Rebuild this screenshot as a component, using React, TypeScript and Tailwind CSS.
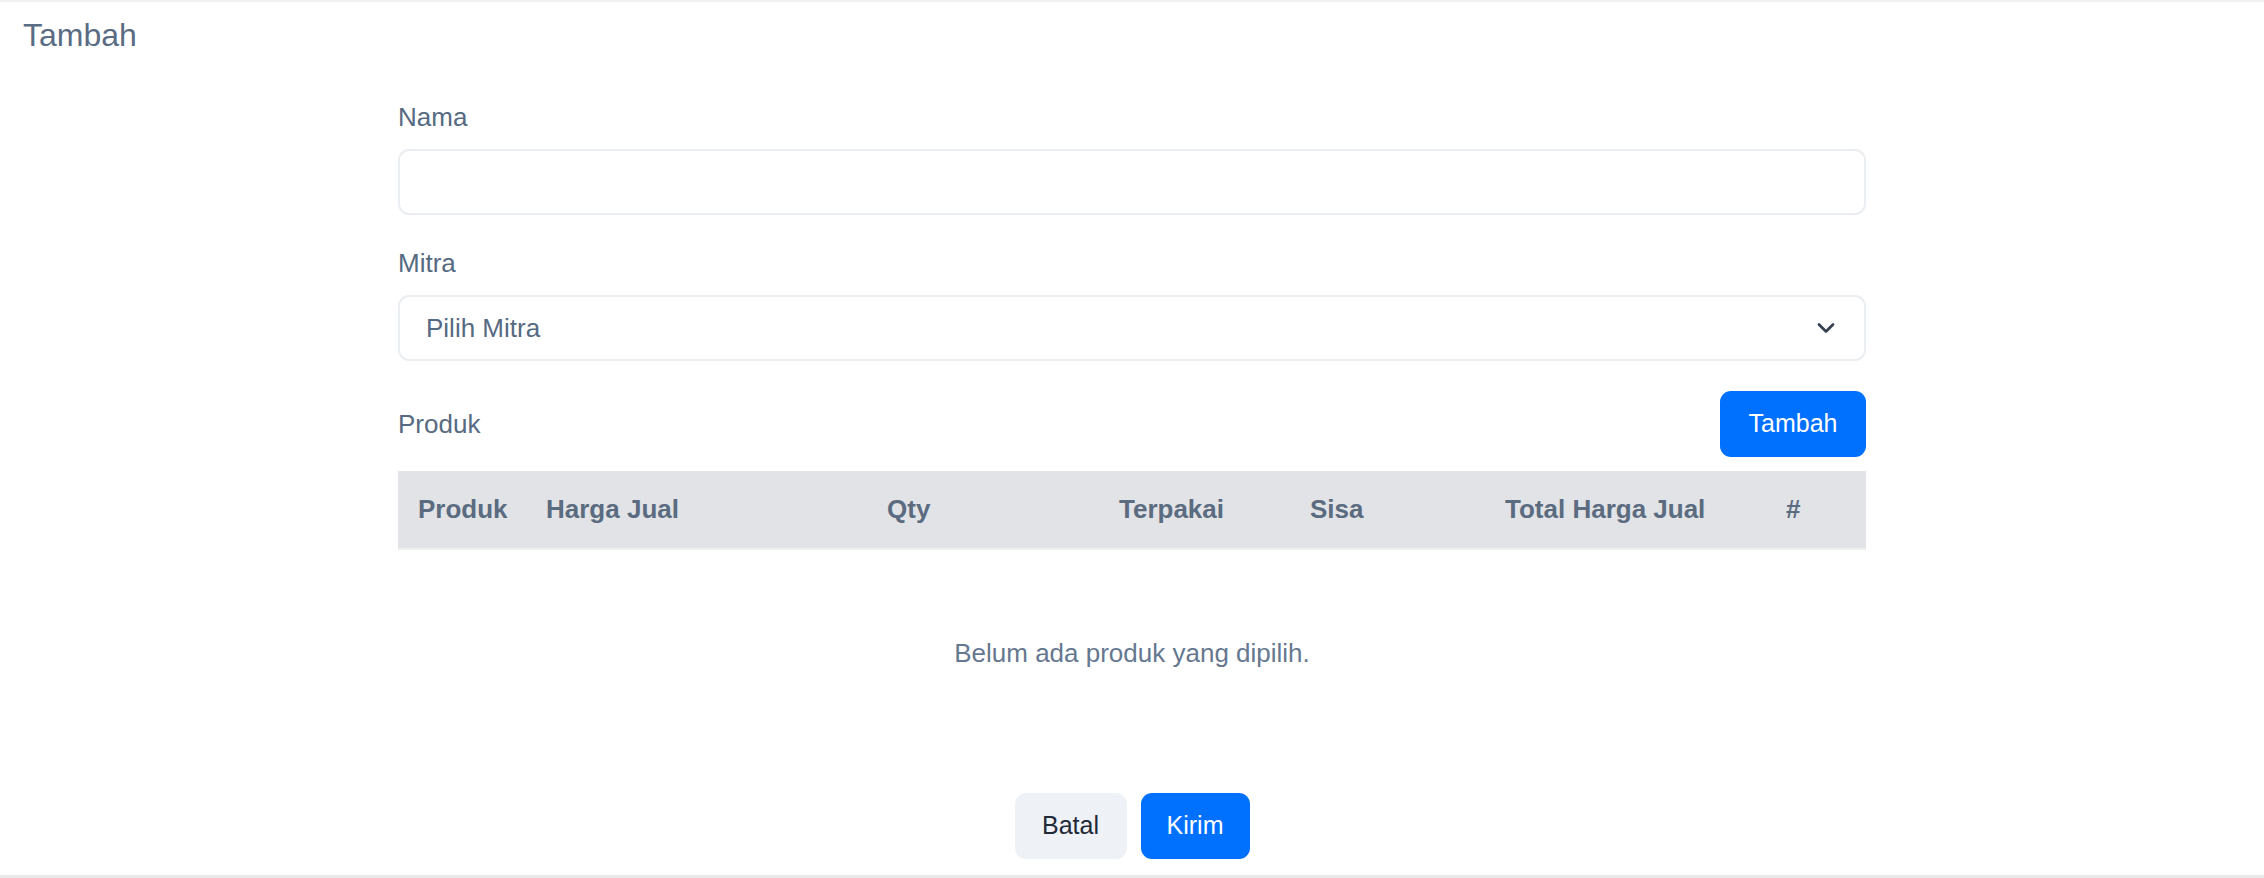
import React, { useState } from 'react';

const font = { fontFamily: '"Liberation Sans", Arial, sans-serif' };

const columns: { label: string; width: string }[] = [
  { label: 'Produk', width: 'w-[128px]' },
  { label: 'Harga Jual', width: 'w-[341px]' },
  { label: 'Qty', width: 'w-[232px]' },
  { label: 'Terpakai', width: 'w-[191px]' },
  { label: 'Sisa', width: 'w-[195px]' },
  { label: 'Total Harga Jual', width: 'w-[281px]' },
  { label: '#', width: 'w-[100px]' },
];

const ChevronDown = () => (
  <svg width="18" height="11" viewBox="0 0 18 11" fill="none">
    <path d="M2 2 L9 9 L16 2" stroke="#374151" strokeWidth="2.75" strokeLinecap="round" strokeLinejoin="round" />
  </svg>
);

const App: React.FC = () => {
  const [nama, setNama] = useState('');
  const [mitra, setMitra] = useState('');

  return (
    <div
      className="h-[878px] w-full bg-white border-t-2 border-t-[#f1f1f1] border-b-[3px] border-b-[#e9e9e9] flex flex-col"
      style={font}
    >
      <h1 className="mt-[15px] pl-[23px] text-[32px] leading-[37px] text-[#5a6c83] font-normal">Tambah</h1>

      <form className="mx-auto w-[1468px] mt-[47px] flex flex-col" onSubmit={e => e.preventDefault()}>
        <label className="text-[26px] leading-[32px] text-[#566a82]">Nama</label>
        <input
          type="text"
          value={nama}
          onChange={e => setNama(e.target.value)}
          className="mt-4 h-[66px] w-full rounded-[11px] border-2 border-[#eaedf1] px-[26px] text-[26px] text-[#566a82] outline-none"
        />

        <label className="mt-8 text-[26px] leading-[32px] text-[#566a82]">Mitra</label>
        <div className="relative mt-4">
          <select
            value={mitra}
            onChange={e => setMitra(e.target.value)}
            className="h-[66px] w-full appearance-none rounded-[11px] border-2 border-[#eaedf1] bg-white pl-[26px] pr-14 text-[26px] text-[#566a82] outline-none"
          >
            <option value="">Pilih Mitra</option>
          </select>
          <span className="pointer-events-none absolute right-[31px] top-1/2 -translate-y-1/2 flex">
            <ChevronDown />
          </span>
        </div>

        <div className="mt-[30px] flex items-center justify-between">
          <span className="text-[26px] leading-[32px] text-[#566a82]">Produk</span>
          <button
            type="button"
            className="h-[66px] w-[146px] rounded-[11px] bg-[#0071ff] text-[25px] text-white"
          >
            Tambah
          </button>
        </div>

        <table className="mt-[14px] w-full table-fixed border-collapse">
          <colgroup>
            {columns.map(c => (
              <col key={c.label} className={c.width} />
            ))}
          </colgroup>
          <thead>
            <tr className="bg-[#e1e3e6] border-b-2 border-[#eceef0]">
              {columns.map(c => (
                <th
                  key={c.label}
                  className="h-[78px] px-5 text-left align-middle text-[26px] font-bold text-[#5b6b80] whitespace-nowrap"
                >
                  {c.label}
                </th>
              ))}
            </tr>
          </thead>
          <tbody>
            <tr>
              <td colSpan={7} className="pt-[87px] pb-[87px] text-center text-[26px] leading-[32px] text-[#66788f]">
                Belum ada produk yang dipilih.
              </td>
            </tr>
          </tbody>
        </table>

        <div className="mt-[37px] flex justify-center gap-[14px]">
          <button type="button" className="h-[66px] w-[112px] rounded-[11px] bg-[#eef1f6] text-[25px] text-[#1f2937]">
            Batal
          </button>
          <button type="submit" className="h-[66px] w-[109px] rounded-[11px] bg-[#0071ff] text-[25px] text-white">
            Kirim
          </button>
        </div>
      </form>
    </div>
  );
};

export default App;
